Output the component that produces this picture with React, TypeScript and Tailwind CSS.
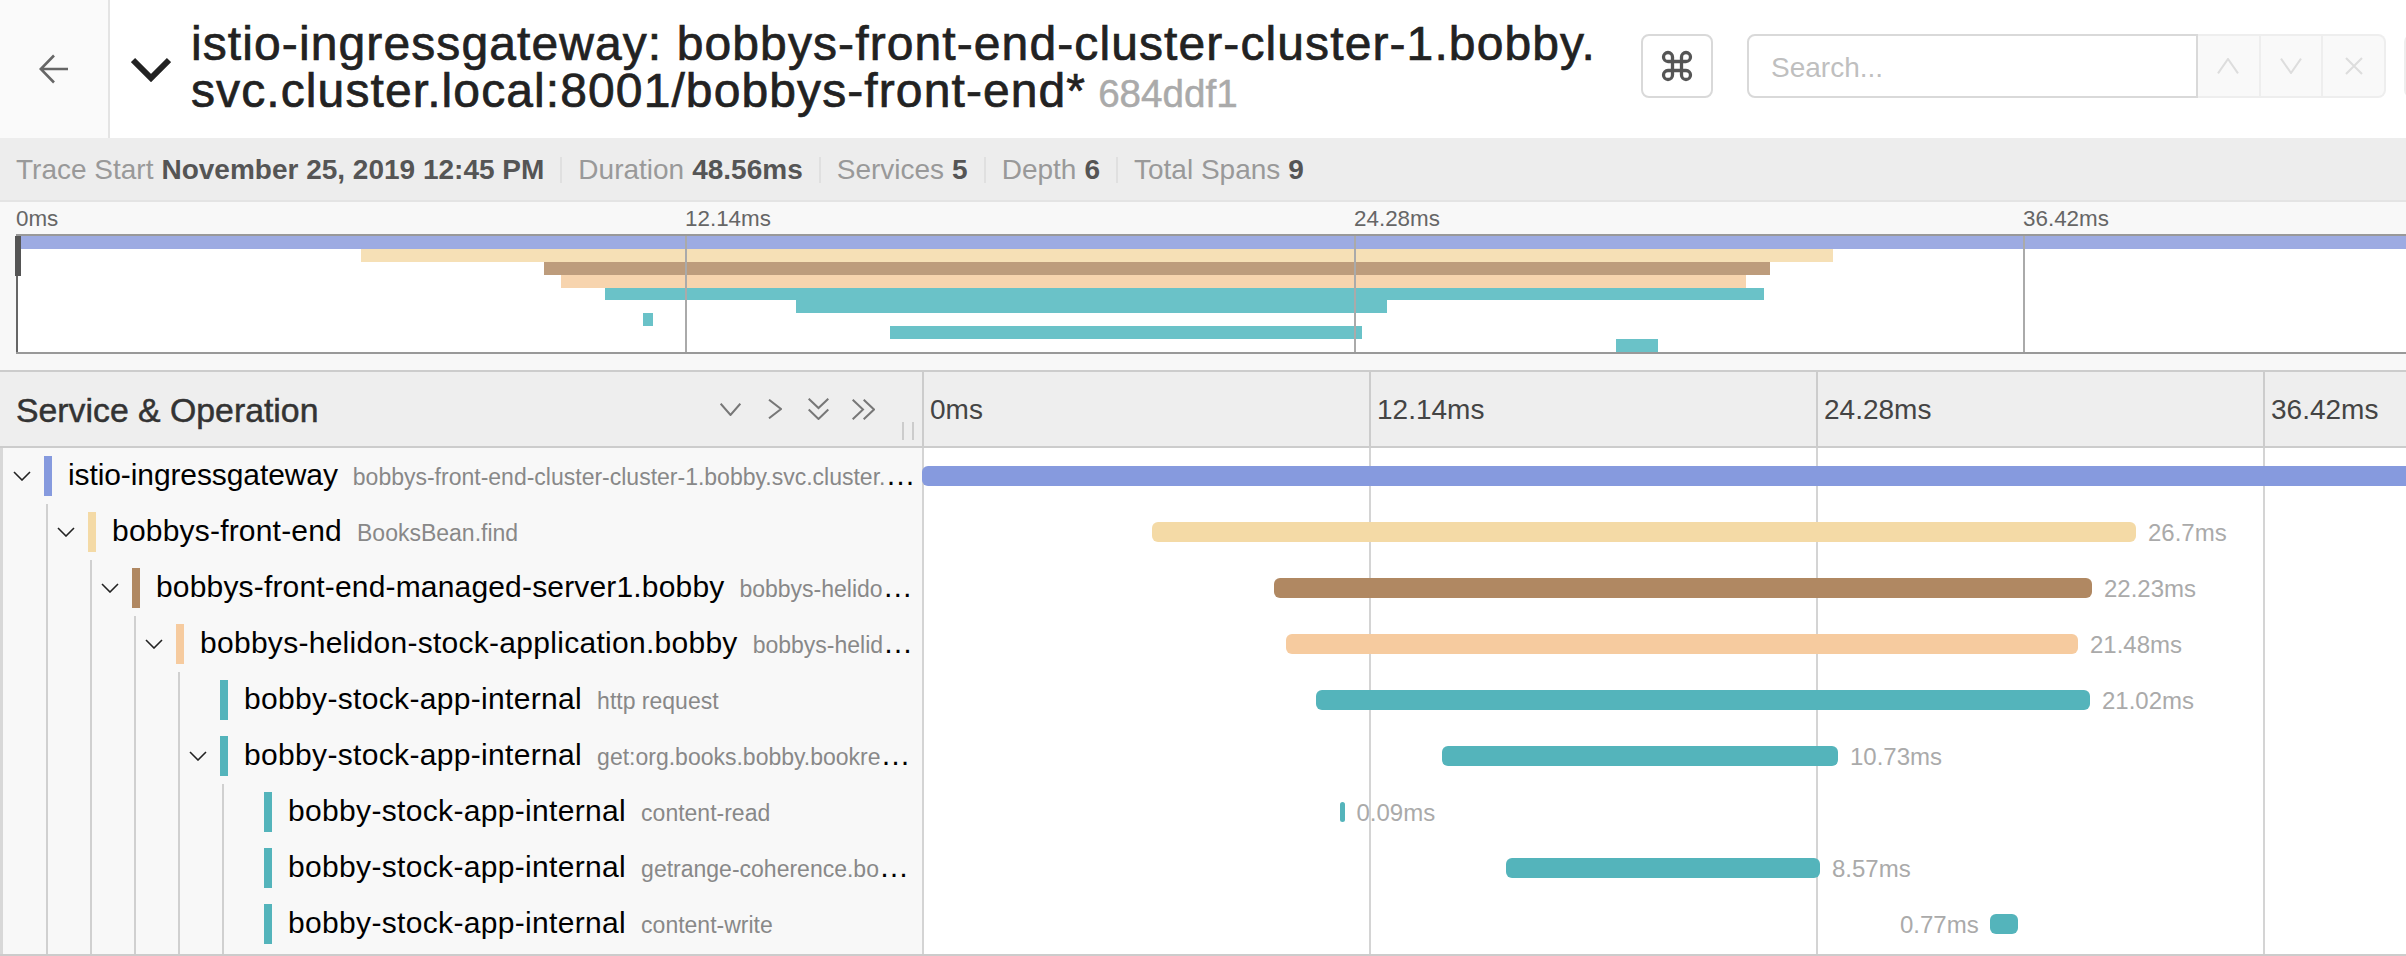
import React from "react";
import { Command } from "lucide-react";

const BLUE = "#869ade";
const TAN = "#f4daa6";
const BROWN = "#b08862";
const PEACH = "#f6cb9f";
const TEAL = "#54b4bb";

type Span = {
  name: string;
  op: string;
  color: string;
  from: number;
  to: number;
  label: string;
  labelLeft?: boolean;
  mini: [number, number];
  miniColor: string;
  track: string;
  children?: Span[];
};

const STOCK = "tracking-[0.33px]";

const last: Span[] = [
  { name: "bobby-stock-app-internal", track: STOCK, op: "content-read", color: TEAL, from: 1340, to: 1344.5, label: "0.09ms", mini: [643, 653], miniColor: "#6ac2c8" },
  { name: "bobby-stock-app-internal", track: STOCK, op: "getrange-coherence.bobby.books", color: TEAL, from: 1506, to: 1820, label: "8.57ms", mini: [890, 1362], miniColor: "#6ac2c8" },
  { name: "bobby-stock-app-internal", track: STOCK, op: "content-write", color: TEAL, from: 1990, to: 2018, label: "0.77ms", labelLeft: true, mini: [1616, 1658], miniColor: "#6ac2c8" },
];

const root: Span = {
  name: "istio-ingressgateway",
  track: "tracking-[-0.1px]",
  op: "bobbys-front-end-cluster-cluster-1.bobby.svc.cluster.local:8001/bobbys-front-end*",
  color: BLUE, from: 922, to: 2500, label: "", mini: [18, 2500], miniColor: "#9dabe2",
  children: [{
    name: "bobbys-front-end", track: "tracking-[0.2px]", op: "BooksBean.find", color: TAN, from: 1152, to: 2136, label: "26.7ms", mini: [361, 1833], miniColor: "#f6e0b6",
    children: [{
      name: "bobbys-front-end-managed-server1.bobby", track: "tracking-[0.17px]", op: "bobbys-helidon-stock-application.bobby", color: BROWN, from: 1274, to: 2092, label: "22.23ms", mini: [544, 1770], miniColor: "#bd9c7c",
      children: [{
        name: "bobbys-helidon-stock-application.bobby", track: "tracking-[0.28px]", op: "bobbys-helidon-stock-application", color: PEACH, from: 1286, to: 2078, label: "21.48ms", mini: [561, 1746], miniColor: "#f7d4ae",
        children: [
          { name: "bobby-stock-app-internal", track: STOCK, op: "http request", color: TEAL, from: 1316, to: 2090, label: "21.02ms", mini: [605, 1764], miniColor: "#6ac2c8" },
          { name: "bobby-stock-app-internal", track: STOCK, op: "get:org.books.bobby.bookresource", color: TEAL, from: 1442, to: 1838, label: "10.73ms", mini: [796, 1387], miniColor: "#6ac2c8", children: last },
        ],
      }],
    }],
  }],
};

function flatten(s: Span): Span[] {
  return [s, ...(s.children ?? []).flatMap(flatten)];
}
const spans = flatten(root);

function Chevron() {
  return (
    <svg viewBox="0 0 18 10" className="w-[18px] h-[10px] block" fill="none" stroke="#222" strokeWidth="1.6">
      <polyline points="1,1 9,9 17,1" />
    </svg>
  );
}

function Row({ span }: { span: Span }) {
  return (
    <div className="flex items-center h-14">
      <div className="w-10 shrink-0 pl-[9px]">{span.children ? <Chevron /> : null}</div>
      <div className="w-2 h-10 shrink-0" style={{ backgroundColor: span.color }} />
      <div className="ml-4 mr-[6px] min-w-0 flex-1 truncate text-[30px] leading-[36px] text-black">
        <span className={span.track}>{span.name}</span>
        <span className="ml-[15px] text-[23px] text-[#888]">{span.op}</span>
      </div>
    </div>
  );
}

function Tree({ span }: { span: Span }) {
  return (
    <>
      <Row span={span} />
      {span.children ? (
        <div className={`ml-[42px] border-l-2 border-[#d0d0d0] ${span.children === last ? "pb-[2px]" : ""}`}>
          {span.children.map((c, i) => (
            <Tree key={i} span={c} />
          ))}
        </div>
      ) : null}
    </>
  );
}

function MetaItem({ label, value, sep = true }: { label: string; value: string; sep?: boolean }) {
  return (
    <>
      <span className="text-[#999]">{label}</span>
      <span className="ml-2 font-bold text-[#555]">{value}</span>
      {sep ? <span className="mx-4 h-[26px] w-[2px] bg-[#e0e0e0]" /> : null}
    </>
  );
}

function ThinIcon({ d, w, h, vb, cls, color }: { d: string; w: string; h: string; vb: string; cls?: string; color: string }) {
  return (
    <svg viewBox={vb} className={`${w} ${h} block shrink-0 ${cls ?? ""}`} fill="none" stroke={color} strokeWidth="2">
      <path d={d} />
    </svg>
  );
}

export default function App() {
  return (
    <div className="w-[2406px] h-[956px] overflow-hidden bg-white font-['Liberation_Sans',Arial,sans-serif]">
      {/* top bar */}
      <header className="flex h-[138px]">
        <div className="w-[110px] shrink-0 bg-[#fafafa] border-r-2 border-[#e4e4e4] flex items-center justify-center">
          <svg viewBox="0 0 30 30" className="w-[30px] h-[30px] block" fill="none" stroke="#666" strokeWidth="2.6">
            <path d="M29 15H2M15 1.5 1.8 15 15 28.5" />
          </svg>
        </div>
        <div className="w-[81px] shrink-0 flex items-center pl-[21px]">
          <svg viewBox="0 0 40 26" className="w-[40px] h-[26px] block" fill="none" stroke="#222" strokeWidth="6">
            <path d="M2 4l18 18L38 4" />
          </svg>
        </div>
        <h1 className="w-[1450px] shrink-0 pt-[21px] text-[48px] leading-[46.5px] tracking-[1.1px] font-normal whitespace-nowrap text-[#222] [-webkit-text-stroke:0.7px_#222]">
          istio-ingressgateway: bobbys-front-end-cluster-cluster-1.bobby.
          <br />
          svc.cluster.local:8001/bobbys-front-end*
          <span className="ml-[12px] text-[38.6px] tracking-normal text-[#aaa] [-webkit-text-stroke:0.5px_#aaa]">684ddf1</span>
        </h1>
        <div className="flex items-start pt-[34px] shrink-0">
          <div className="w-[72px] h-16 shrink-0 flex items-center justify-center rounded-lg border-2 border-[#d9d9d9] bg-white">
            <Command className="w-[36px] h-[36px] text-[#555]" strokeWidth={2.2} />
          </div>
          <div className="ml-[34px] w-[451px] h-16 shrink-0 flex items-center rounded-l-lg border-2 border-[#d9d9d9] pl-[22px] pt-[3px] text-[28px] text-[#bfbfbf]">
            Search...
          </div>
          <div className="w-[188px] h-16 shrink-0 flex rounded-r-lg border-2 border-l-0 border-[#eeeeee] bg-[#f9f9f9]">
            <div className="flex-1 flex items-center justify-center border-r-2 border-[#eeeeee]">
              <ThinIcon vb="0 0 22 16" w="w-[22px]" h="h-[16px]" d="M1 15.4 11 1l10 14.4" color="#dddddd" />
            </div>
            <div className="flex-1 flex items-center justify-center border-r-2 border-[#eeeeee]">
              <ThinIcon vb="0 0 22 16" w="w-[22px]" h="h-[16px]" d="M1 .6 11 15 21 .6" color="#dddddd" />
            </div>
            <div className="flex-1 flex items-center justify-center">
              <ThinIcon vb="0 0 18 18" w="w-[18px]" h="h-[18px]" d="M1 1l16 16M17 1 1 17" color="#dddddd" />
            </div>
          </div>
          <div className="ml-[18px] w-[72px] h-16 shrink-0 rounded-l-lg border-2 border-[#eeeeee]" />
        </div>
      </header>

      {/* trace meta */}
      <div className="flex items-center h-[62px] pl-4 pt-[2px] bg-[#ededed] text-[28px] leading-[32px] whitespace-nowrap">
        <MetaItem label="Trace Start" value="November 25, 2019 12:45 PM" />
        <MetaItem label="Duration" value="48.56ms" />
        <MetaItem label="Services" value="5" />
        <MetaItem label="Depth" value="6" />
        <MetaItem label="Total Spans" value="9" sep={false} />
      </div>

      {/* minimap */}
      <section className="h-[170px] border-t-2 border-[#e4e4e4] bg-[#f8f8f8] pl-4 pt-[1px]">
        <div className="flex h-[31px] items-center text-[22.4px] text-[#666]">
          {["0ms", "12.14ms", "24.28ms", "36.42ms"].map((t) => (
            <div key={t} className="w-[669px] shrink-0">{t}</div>
          ))}
        </div>
        <div className="relative h-[120px] bg-white border-y-2 border-[#999]">
          <div className="flex flex-col h-full">
            {spans.map((s, i) => (
              <div key={i} className="flex-1 min-h-0">
                <div
                  className="h-full"
                  style={{ marginLeft: s.mini[0] - 16, width: s.mini[1] - s.mini[0], backgroundColor: s.miniColor }}
                />
              </div>
            ))}
          </div>
          <div className="absolute inset-0 flex">
            <div className="w-[669px] shrink-0 border-l-2 border-[#666]" />
            <div className="w-[669px] shrink-0 border-l-2 border-[#aaa]" />
            <div className="w-[669px] shrink-0 border-l-2 border-[#aaa]" />
            <div className="w-[669px] shrink-0 border-l-2 border-[#aaa]" />
          </div>
          <div className="absolute left-[-1px] top-0 w-[6px] h-10 bg-[#555]" />
        </div>
      </section>

      {/* column headers */}
      <div className="flex h-[78px] border-y-2 border-[#cccccc] bg-[#eeeeee]">
        <div className="relative w-[922px] shrink-0 flex items-center pl-4">
          <div className="pt-[2px] text-[33.8px] leading-[40px] text-[#333] [-webkit-text-stroke:0.5px_#333]">Service &amp; Operation</div>
          <ThinIcon vb="0 0 21 13" w="w-[21px]" h="h-[13px]" cls="ml-auto" d="M.7.7 10.5 12 20.3.7" color="#777" />
          <ThinIcon vb="0 0 14 20" w="w-[14px]" h="h-[20px]" cls="ml-[27px]" d="M1 .7 13 10 1 19.3" color="#777" />
          <ThinIcon vb="0 0 21 22" w="w-[21px]" h="h-[22px]" cls="ml-[26px]" d="M.7.7 10.5 10 20.3.7M.7 11.5 10.5 21l9.8-9.5" color="#777" />
          <ThinIcon vb="0 0 23 21" w="w-[23px]" h="h-[21px]" cls="ml-[23px] mr-[47px]" d="M.7.7 11 10.5.7 20.3M11.7.7 22 10.5 11.7 20.3" color="#777" />
          <div className="absolute left-[902px] top-[50px] flex gap-2">
            <div className="w-[2px] h-[18px] bg-[#ccc]" />
            <div className="w-[2px] h-[18px] bg-[#ccc]" />
          </div>
        </div>
        <div className="flex">
          {["0ms", "12.14ms", "24.28ms", "36.42ms"].map((t) => (
            <div key={t} className="w-[447px] shrink-0 border-l-2 border-[#cccccc] flex items-center pl-[6px] pt-[2px] text-[28px] text-[#444]">
              {t}
            </div>
          ))}
        </div>
      </div>

      {/* body */}
      <div className="flex h-[508px] border-b-2 border-[#cccccc]">
        <div className="w-[922px] shrink-0 bg-[#f8f8f8] border-l-[3px] border-[#d8d8d8] pl-px overflow-hidden">
          <Tree span={root} />
        </div>
        <div className="relative flex-1 min-w-0 overflow-hidden">
          <div className="absolute inset-0 flex">
            {[0, 1, 2, 3].map((i) => (
              <div key={i} className="w-[447px] shrink-0 border-l-2 border-[#d4d4d4]" />
            ))}
          </div>
          <div className="relative">
            {spans.map((s, i) => (
              <div key={i} className="flex items-center h-14 whitespace-nowrap text-[24px] text-[#aaa]">
                {s.labelLeft ? (
                  <>
                    <span style={{ marginLeft: s.from - 922 - 90 }} className="w-[78px] mr-3 pt-px text-right">{s.label}</span>
                    <div className="h-5 rounded-md shrink-0" style={{ width: s.to - s.from, backgroundColor: s.color }} />
                  </>
                ) : (
                  <>
                    <div className="h-5 rounded-md shrink-0" style={{ marginLeft: s.from - 922, width: s.to - s.from, backgroundColor: s.color }} />
                    <span className="ml-3 pt-px">{s.label}</span>
                  </>
                )}
              </div>
            ))}
          </div>
        </div>
      </div>
    </div>
  );
}
